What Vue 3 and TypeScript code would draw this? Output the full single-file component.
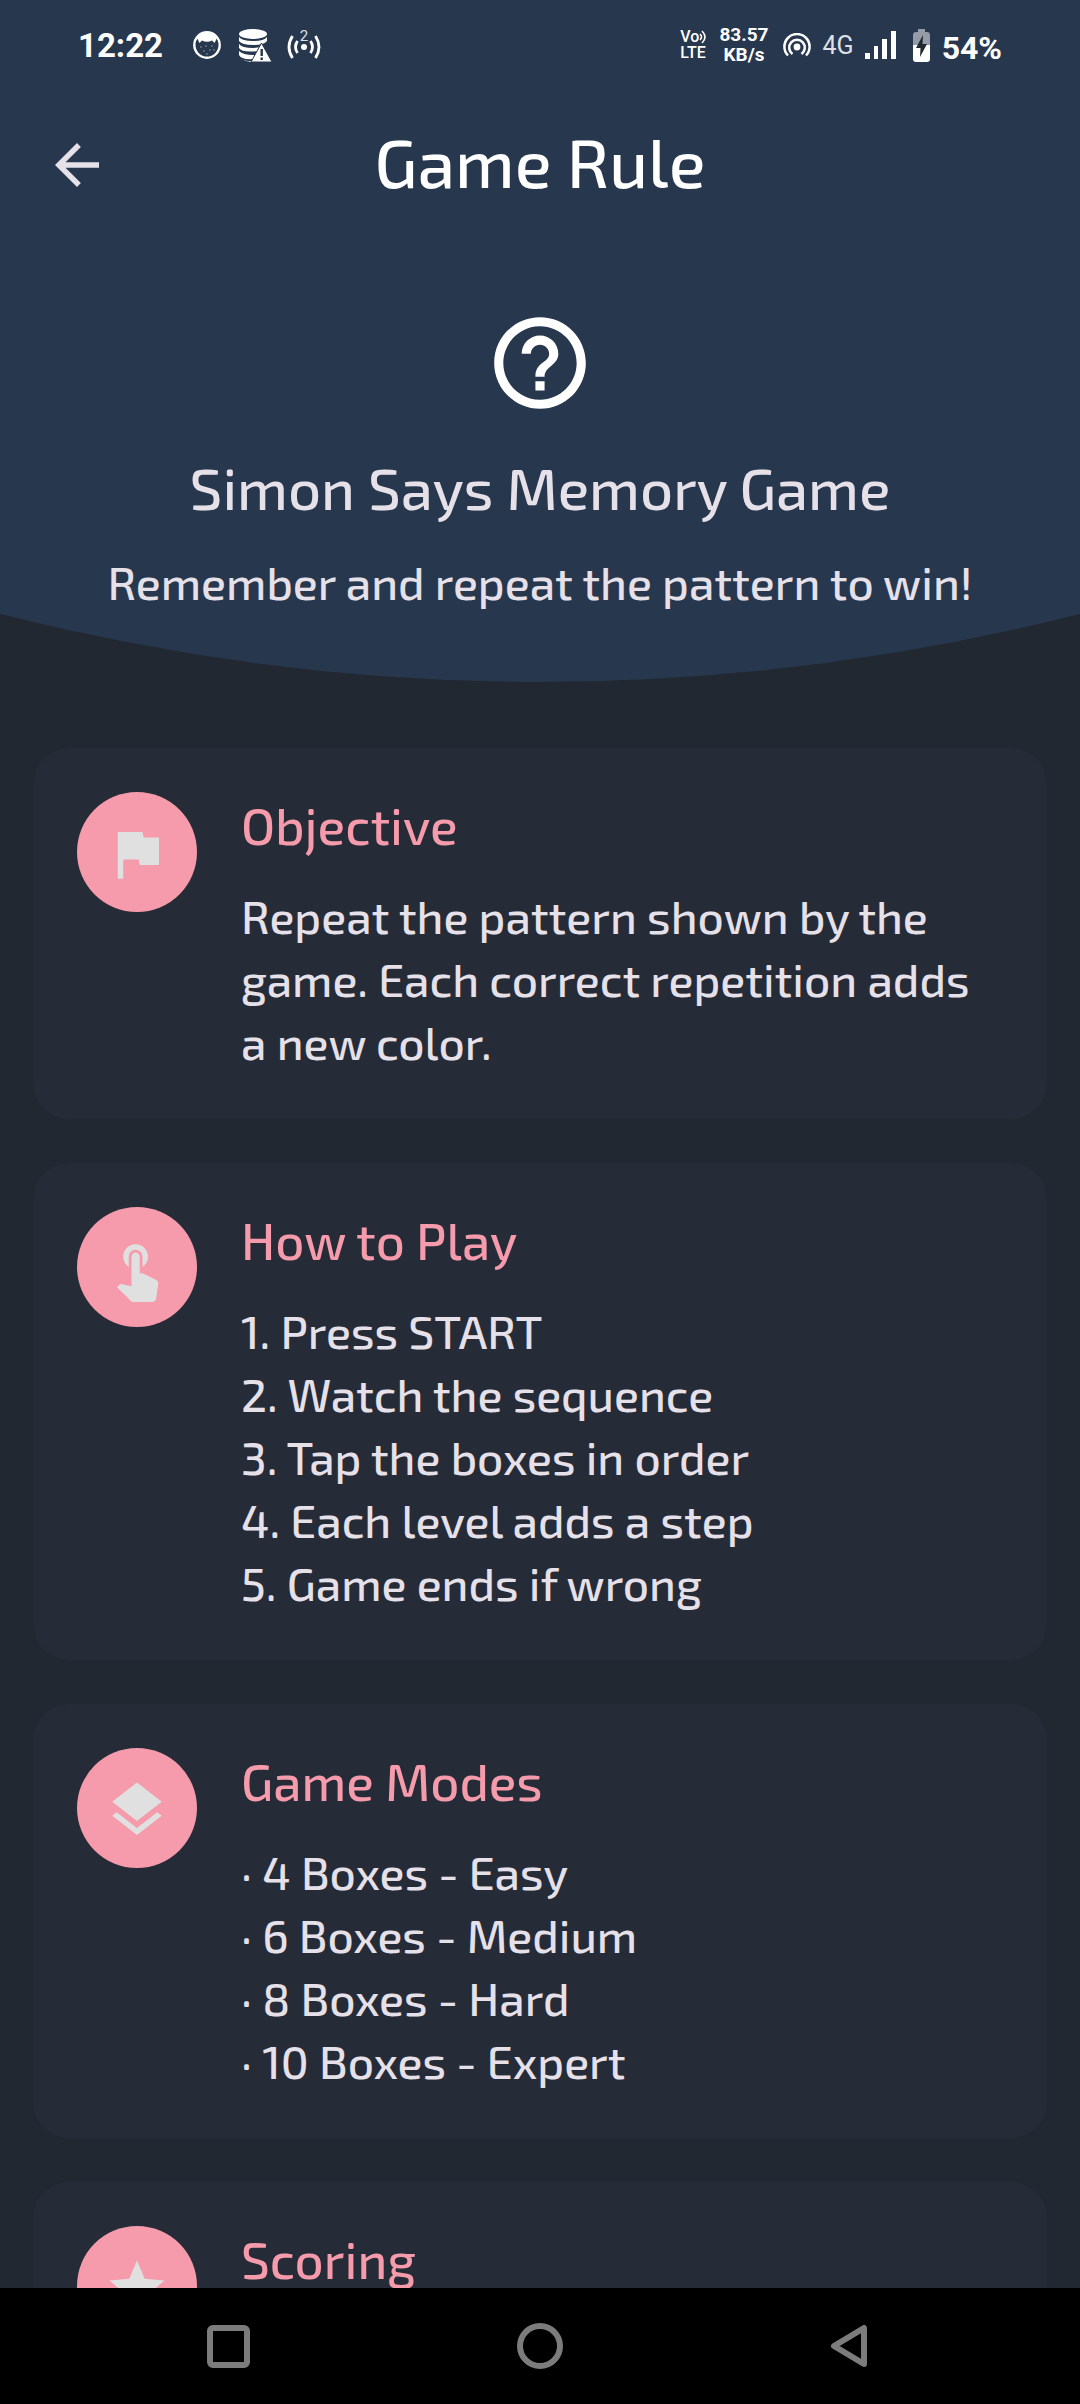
<script setup lang="ts">
interface Rule {
  title: string
  icon: string
  lines: string[]
}

const rules: Rule[] = [
  {
    title: 'Objective',
    icon: 'M14.4 6L14 4H5v17h2v-7h5.6l.4 2h7V6z',
    lines: ['Repeat the pattern shown by the game. Each correct repetition adds a new color.'],
  },
  {
    title: 'How to Play',
    icon: 'M9 11.24V7.5C9 6.12 10.12 5 11.5 5S14 6.12 14 7.5v3.74c1.21-.81 2-2.18 2-3.74C16 5.01 13.99 3 11.5 3S7 5.01 7 7.5c0 1.56.79 2.93 2 3.74zm9.84 4.63l-4.54-2.26c-.17-.07-.35-.11-.54-.11H13v-6c0-.83-.67-1.5-1.5-1.5S10 6.67 10 7.5v10.74l-3.43-.72c-.08-.01-.15-.03-.24-.03-.31 0-.59.13-.79.33l-.79.8 4.94 4.94c.27.27.65.44 1.06.44h6.79c.75 0 1.33-.55 1.44-1.28l.75-5.27c.01-.07.02-.14.02-.2 0-.62-.38-1.16-.91-1.38z',
    lines: [
      '1. Press START',
      '2. Watch the sequence',
      '3. Tap the boxes in order',
      '4. Each level adds a step',
      '5. Game ends if wrong',
    ],
  },
  {
    title: 'Game Modes',
    icon: 'M11.99 18.54l-7.37-5.73L3 14.07l9 7 9-7-1.63-1.27-7.38 5.74zM12 16l7.36-5.73L21 9l-9-7-9 7 1.63 1.27L12 16z',
    lines: ['· 4 Boxes - Easy', '· 6 Boxes - Medium', '· 8 Boxes - Hard', '· 10 Boxes - Expert'],
  },
  {
    title: 'Scoring',
    icon: 'M12 17.27L18.18 21l-1.64-7.03L22 9.24l-7.19-.61L12 2 9.19 8.63 2 9.24l5.46 4.73L5.82 21z',
    lines: [],
  },
]
</script>

<template>
  <div class="screen">
    <main class="content">
      <header class="header">
        <div class="status">
          <div class="status-left">
            <span class="clock">12:22</span>
            <svg class="s-cat" viewBox="0 0 28 28" aria-hidden="true">
              <circle cx="14" cy="14" r="12.7" fill="none" stroke="#fff" stroke-width="2.4" />
              <path d="M4 7Q8 2 14 2T24 7L21.500 12 19 9.500Q14 12 9 9.500L6.500 12z" fill="#fff" />
              <g fill="#fff" opacity=".5">
                <circle cx="8" cy="16" r=".8" /><circle cx="13" cy="15" r=".8" /><circle cx="19" cy="15" r=".8" />
                <circle cx="11" cy="20" r=".8" /><circle cx="17" cy="19" r=".8" /><circle cx="14" cy="23" r=".8" />
                <circle cx="21" cy="19" r=".8" />
              </g>
            </svg>
            <svg class="s-db" viewBox="0 0 33 33" aria-hidden="true">
              <ellipse cx="14" cy="5" rx="14" ry="5" fill="#fff" />
              <path
                d="M0 8Q3 12 14 12T28 8V12Q25 16 14 16T0 12zM0 15Q3 19 14 19L22 18 20 22Q3 24 0 19zM0 22Q4 26 14 26L17.500 26 15 30Q2 31 0 26zM1 30Q5 32 12 33L13 32Q5 32 1 30z"
                fill="#fff"
              />
              <path d="M22.500 14L33 33H12z" fill="#fff" stroke="#27374d" stroke-width="1" />
              <path d="M21.500 20h2.400v7h-2.400zM21.500 28.500h2.400v2.400h-2.400z" fill="#27374d" />
            </svg>
            <svg class="s-hot" viewBox="0 -4 34 40" aria-hidden="true">
              <circle cx="17" cy="18" r="3" fill="#fff" />
              <g fill="none" stroke="#fff" stroke-width="2.800">
                <path d="M10.500 12Q6.500 18 10.500 24M23.500 12Q27.500 18 23.500 24M5.500 7Q-1.500 18 5.500 29M28.500 7Q35.500 18 28.500 29" />
              </g>
              <text x="17" y="12" text-anchor="middle" font-size="15" fill="#dde1e6">2</text>
            </svg>
          </div>
          <div class="status-right">
            <div class="volte">
              <span class="vo">
                Vo
                <svg viewBox="0 0 8 14" aria-hidden="true">
                  <path d="M1 4Q4 7 1 10M3 1Q9 7 3 13" fill="none" stroke="#fff" stroke-width="1.600" />
                </svg>
              </span>
              <span>LTE</span>
            </div>
            <div class="speed"><span>83.57</span><span>KB/s</span></div>
            <svg class="s-cast" viewBox="0 0 28 24" aria-hidden="true">
              <circle cx="14" cy="14" r="3.400" fill="#fff" />
              <g fill="none" stroke="#fff" stroke-width="2.500">
                <path d="M9.500 21A7.800 7.800 0 1 1 18.500 21" />
                <path d="M5 22.500A12.600 12.600 0 1 1 23 22.500" />
              </g>
            </svg>
            <span class="net">4G</span>
            <svg class="s-bars" viewBox="0 0 31 28" aria-hidden="true">
              <path d="M0 22h5v6H0zM9 15h4v13H9zM17 8h5v20h-5zM26 0h5v28h-5z" fill="#fff" />
            </svg>
            <svg class="s-bat" viewBox="0 0 17 33" aria-hidden="true">
              <path d="M5 0h7v3h2q3 0 3 3v10H0V6q0-3 3-3h2z" fill="#959ca8" />
              <path d="M0 16h17v14q0 3-3 3H3q-3 0-3-3z" fill="#fff" />
              <path d="M10 6L3 19h4.500L7 28l7-13H9.500z" fill="#222831" />
            </svg>
            <span class="level">54%</span>
          </div>
        </div>

        <div class="appbar">
          <button class="back" type="button" aria-label="Back">
            <svg viewBox="0 0 24 24" aria-hidden="true">
              <path d="M20 11H7.830l5.590-5.590L12 4l-8 8 8 8 1.410-1.410L7.830 13H20v-2z" fill="#e6e0e9" />
            </svg>
          </button>
          <h1>Game Rule</h1>
        </div>

        <section class="hero">
          <svg class="help" viewBox="0 0 24 24" aria-hidden="true">
            <path
              d="M11 18h2v-2h-2v2zm1-16C6.480 2 2 6.480 2 12s4.480 10 10 10 10-4.480 10-10S17.520 2 12 2zm0 18c-4.410 0-8-3.590-8-8s3.590-8 8-8 8 3.590 8 8-3.590 8-8 8zm0-14c-2.210 0-4 1.790-4 4h2c0-1.100.9-2 2-2s2 .9 2 2c0 2-3 1.750-3 5h2c0-2.250 3-2.500 3-5 0-2.210-1.790-4-4-4z"
              fill="#fff"
            />
          </svg>
          <h2>Simon Says Memory Game</h2>
          <p>Remember and repeat the pattern to win!</p>
        </section>
      </header>
      <svg class="curve" viewBox="0 0 1080 68" preserveAspectRatio="none" aria-hidden="true">
        <path d="M0 0Q540 136 1080 0z" fill="#27374d" />
      </svg>

      <div class="cards">
        <article v-for="rule in rules" :key="rule.title" class="card">
          <div class="disc">
            <svg viewBox="0 0 24 24" aria-hidden="true"><path :d="rule.icon" fill="#e0e0e0" /></svg>
          </div>
          <div class="text">
            <h3>{{ rule.title }}</h3>
            <p v-for="line in rule.lines" :key="line">{{ line }}</p>
          </div>
        </article>
      </div>
    </main>

    <nav class="navbar">
      <button type="button" aria-label="Recent apps">
        <svg viewBox="0 0 46 46"><rect x="5" y="5" width="37" height="37" rx="3" /></svg>
      </button>
      <button type="button" aria-label="Home">
        <svg viewBox="0 0 46 46"><circle cx="23" cy="23" r="20" /></svg>
      </button>
      <button type="button" aria-label="Go back">
        <svg viewBox="0 0 46 46"><path d="M35 5V41L5 23z" stroke-linejoin="round" /></svg>
      </button>
    </nav>
  </div>
</template>

<style>
body {
  margin: 0;
  background: #222831;
}
</style>

<style scoped>
.screen {
  display: flex;
  flex-direction: column;
  height: 100vh;
  font-family: "Exo 2", Exo, Roboto, sans-serif;
  color: #e6e0e9;
  background: #222831;
}
.content {
  flex: 1;
  min-height: 0;
  overflow-y: auto;
  scrollbar-width: none;
}
h1,
h2,
h3,
p {
  margin: 0;
  font-weight: 500;
}
svg {
  display: block;
  flex: none;
}
button {
  padding: 0;
  border: 0;
  background: none;
}
.header {
  background: #27374d;
}

.status {
  display: flex;
  justify-content: space-between;
  align-items: center;
  height: 90px;
  padding: 0 78px;
  color: #fff;
  font-family: Roboto, sans-serif;
}
.status-left,
.status-right {
  display: flex;
  align-items: center;
}
.clock {
  margin-right: 30px;
  font-size: 33px;
  font-weight: 700;
}
.s-cat {
  width: 28px;
  margin-right: 18px;
}
.s-db {
  width: 33px;
  margin-right: 15px;
}
.s-hot {
  width: 34px;
}
.volte {
  display: flex;
  flex-direction: column;
  margin-right: 12px;
  font-size: 16px;
  font-weight: 500;
  line-height: 16px;
}
.vo {
  display: flex;
  align-items: center;
}
.vo svg {
  width: 8px;
}
.speed {
  display: flex;
  flex-direction: column;
  align-items: center;
  margin-right: 14px;
  font-size: 19px;
  font-weight: 700;
  line-height: 20px;
}
.s-cast {
  width: 28px;
  margin-right: 12px;
}
.net {
  margin-right: 11px;
  font-size: 25px;
  color: #dde1e6;
}
.s-bars {
  width: 31px;
  margin-right: 17px;
}
.s-bat {
  width: 17px;
  margin-right: 12px;
}
.level {
  align-self: flex-end;
  font-size: 32px;
  font-weight: 700;
  line-height: 34px;
}

.appbar {
  display: grid;
  grid-template-columns: 66px 1fr 66px;
  align-items: center;
  height: 150px;
  padding: 0 44px;
}
.back svg {
  width: 66px;
}
h1 {
  padding-bottom: 8px;
  font-size: 68px;
  line-height: 80px;
  text-align: center;
  color: #fff;
}

.hero {
  display: flex;
  flex-direction: column;
  align-items: center;
  padding-top: 68px;
  text-align: center;
}
.help {
  width: 110px;
}
.hero h2 {
  margin-top: 33px;
  font-size: 58px;
  line-height: 72px;
}
.hero p {
  margin-top: 30px;
  margin-bottom: 3px;
  font-size: 46px;
  line-height: 58px;
}
.curve {
  width: 100%;
  height: 68px;
}

.cards {
  display: flex;
  flex-direction: column;
  gap: 44px;
  padding: 66px 33px;
}
.card {
  display: flex;
  gap: 44px;
  padding: 44px 44px 46px;
  border-radius: 36px;
  background: #252b37;
}
.disc {
  box-sizing: border-box;
  flex: none;
  display: flex;
  align-items: center;
  justify-content: center;
  width: 120px;
  height: 120px;
  padding-top: 4px;
  border-radius: 50%;
  background: #f59bab;
}
.disc svg {
  width: 66px;
}
.text {
  flex: 1;
  min-width: 0;
}
h3 {
  margin-bottom: 26px;
  font-size: 51px;
  line-height: 66px;
  color: #f59bab;
}
.text p {
  font-size: 46px;
  line-height: 63px;
}

.navbar {
  display: grid;
  grid-template-columns: repeat(3, 1fr);
  flex: none;
  height: 116px;
  padding: 0 72px;
  background: #000;
}
.navbar button {
  display: flex;
  align-items: center;
  justify-content: center;
}
.navbar svg {
  width: 46px;
  fill: none;
  stroke: #7c7c7c;
  stroke-width: 6px;
}
</style>
